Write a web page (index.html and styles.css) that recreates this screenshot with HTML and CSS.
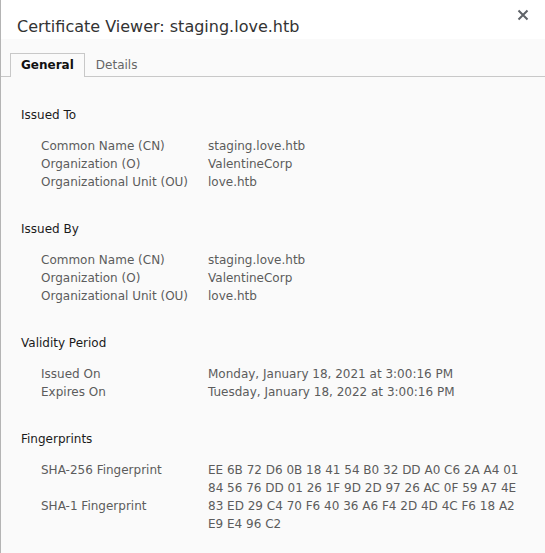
FILE: index.html
```html
<!DOCTYPE html>
<html>
<head>
<meta charset="utf-8">
<link rel="stylesheet" href="styles.css">
</head>
<body>
<div class="dialog">
  <header class="header">
    <h1 class="title">Certificate Viewer: staging.love.htb</h1>
    <button class="close" aria-label="Close">
      <svg width="12" height="12" viewBox="0 0 12 12"><path d="M1.5 1.5 L10.5 10.5 M10.5 1.5 L1.5 10.5" stroke="#5f6368" stroke-width="2" fill="none"/></svg>
    </button>
  </header>
  <div class="body">
    <nav class="tabs">
      <span class="tab active">General</span>
      <span class="tab">Details</span>
    </nav>
    <div class="content">
      <section class="section">
        <h2 class="heading">Issued To</h2>
        <div class="rows">
          <div class="label">Common Name (CN)</div><div class="value">staging.love.htb</div>
          <div class="label">Organization (O)</div><div class="value">ValentineCorp</div>
          <div class="label">Organizational Unit (OU)</div><div class="value">love.htb</div>
        </div>
      </section>
      <section class="section">
        <h2 class="heading">Issued By</h2>
        <div class="rows">
          <div class="label">Common Name (CN)</div><div class="value">staging.love.htb</div>
          <div class="label">Organization (O)</div><div class="value">ValentineCorp</div>
          <div class="label">Organizational Unit (OU)</div><div class="value">love.htb</div>
        </div>
      </section>
      <section class="section">
        <h2 class="heading">Validity Period</h2>
        <div class="rows">
          <div class="label">Issued On</div><div class="value">Monday, January 18, 2021 at 3:00:16 PM</div>
          <div class="label">Expires On</div><div class="value">Tuesday, January 18, 2022 at 3:00:16 PM</div>
        </div>
      </section>
      <section class="section">
        <h2 class="heading">Fingerprints</h2>
        <div class="rows">
          <div class="label">SHA-256 Fingerprint</div><div class="value">EE 6B 72 D6 0B 18 41 54 B0 32 DD A0 C6 2A A4 01<br>84 56 76 DD 01 26 1F 9D 2D 97 26 AC 0F 59 A7 4E</div>
          <div class="label">SHA-1 Fingerprint</div><div class="value">83 ED 29 C4 70 F6 40 36 A6 F4 2D 4D 4C F6 18 A2<br>E9 E4 96 C2</div>
        </div>
      </section>
    </div>
  </div>
</div>
</body>
</html>
```
FILE: styles.css
```css
html, body {
  margin: 0;
  padding: 0;
  height: 100%;
}
body {
  font-family: "DejaVu Sans", sans-serif;
  font-size: 12px;
  background: #fafafa;
}
.dialog {
  display: flex;
  flex-direction: column;
  min-height: 100%;
  border-left: 1px solid #b4b4b4;
  box-sizing: border-box;
}
.header {
  position: relative;
  background: #ffffff;
  height: 39px;
  box-sizing: border-box;
  padding: 17px 0 0 16px;
}
.title {
  margin: 0;
  font-size: 16px;
  font-weight: normal;
  line-height: 19px;
  color: #333333;
}
.close {
  position: absolute;
  top: 9px;
  right: 16px;
  width: 12px;
  height: 12px;
  padding: 0;
  border: 0;
  background: none;
  display: flex;
}
.body {
  flex: 1;
  background: #fafafa;
  padding-top: 14px;
}
.tabs {
  display: flex;
  border-bottom: 1px solid #c8c8c8;
  padding-left: 9px;
}
.tab {
  height: 22px;
  line-height: 22px;
  padding: 0 10px;
  border: 1px solid transparent;
  border-bottom: 0;
  color: #666666;
  margin-bottom: -1px;
}
.tab.active {
  font-weight: bold;
  color: #111111;
  border-color: #c8c8c8;
  background: #fafafa;
  padding-bottom: 1px;
}
.content {
  padding: 29px 0 0 20px;
  display: flex;
  flex-direction: column;
  gap: 29px;
}
.heading {
  margin: 0 0 13px 0;
  font-size: 12px;
  font-weight: normal;
  line-height: 18px;
  color: #1a1a1a;
}
.rows {
  display: grid;
  grid-template-columns: 167px 1fr;
  padding-left: 20px;
  line-height: 18px;
  color: #5c5c5c;
}
```
